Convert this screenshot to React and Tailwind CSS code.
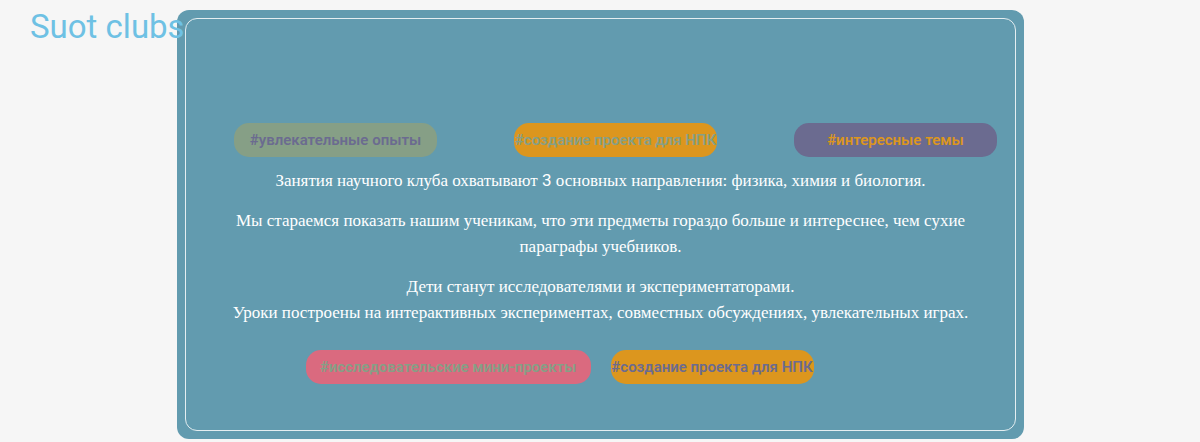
const colors = {
  sage: "bg-[#869f86] text-[#6b6b90]",
  amberOnSage: "bg-[#dc961e] text-[#869f86]",
  plum: "bg-[#6b6b90] text-[#dc961e]",
  rose: "bg-[#da6a7f] text-[#869f86]",
  amberOnPlum: "bg-[#dc961e] text-[#6b6b90]",
};

function Tag({ tone, wide, children }) {
  return (
    <li
      className={`flex h-[34px] shrink-0 items-center justify-center whitespace-nowrap rounded-[15px] font-[family-name:Roboto,sans-serif] text-[15px] font-semibold ${
        wide ? "w-[285px]" : "w-[203px]"
      } ${colors[tone]}`}
    >
      {children}
    </li>
  );
}

export default function App() {
  return (
    <div className="flex min-h-screen items-start bg-[#f6f6f6] pt-[10px] pb-[3px]">
      <h1 className="z-10 -mr-2 w-[185px] shrink-0 whitespace-nowrap pl-[30px] font-[family-name:Roboto,sans-serif] text-[33px] leading-[34px] text-[#6ec1e4]">
        Suot clubs
      </h1>
      <main className="mr-44 flex-1 rounded-xl bg-[#629baf] p-2">
        <section className="rounded-xl border border-[#e4eef1] px-4 pt-26 pb-[46px]">
          <ul className="flex justify-between pr-0.5 pl-8">
            <Tag tone="sage">#увлекательные опыты</Tag>
            <Tag tone="amberOnSage">#создание проекта для НПК</Tag>
            <Tag tone="plum">#интересные темы</Tag>
          </ul>
          <div className="mx-6 mt-[10px] flex flex-col gap-[14px] text-center font-[family-name:'Liberation_Serif',serif] text-[17px] leading-[26px] text-white">
            <p>
              Занятия научного клуба охватывают <span className="font-[family-name:Roboto,sans-serif]">3</span> основных направления: физика, химия и биология.
            </p>
            <p>
              Мы стараемся показать нашим ученикам, что эти предметы гораздо больше и интереснее, чем сухие
              параграфы учебников.
            </p>
            <p>
              Дети станут исследователями и экспериментаторами.
              <br />
              Уроки построены на интерактивных экспериментах, совместных обсуждениях, увлекательных играх.
            </p>
          </div>
          <ul className="mt-6 mr-[82px] flex justify-center gap-5">
            <Tag tone="rose" wide>#исследовательские мини-проекты</Tag>
            <Tag tone="amberOnPlum">#создание проекта для НПК</Tag>
          </ul>
        </section>
      </main>
    </div>
  );
}
